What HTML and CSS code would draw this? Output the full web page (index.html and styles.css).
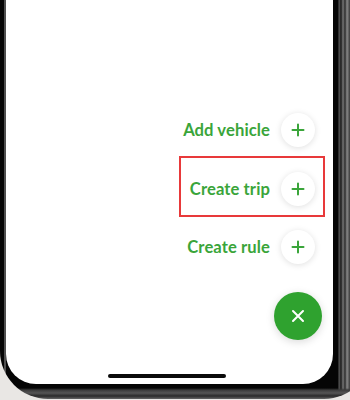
FILE: index.html
```html
<!DOCTYPE html>
<html>
<head>
<meta charset="utf-8">
<link rel="stylesheet" href="styles.css">
</head>
<body>
<div class="device">
  <div class="bezel">
    <div class="screen">
      <div class="menu">
        <div class="row">
          <span class="label">Add vehicle</span>
          <span class="circle"><svg width="14" height="14" viewBox="0 0 14 14"><path d="M7 1.5v11M1.5 7h11" stroke="#3aa53a" stroke-width="2" stroke-linecap="round"/></svg></span>
        </div>
        <div class="row highlight">
          <span class="label">Create trip</span>
          <span class="circle"><svg width="14" height="14" viewBox="0 0 14 14"><path d="M7 1.5v11M1.5 7h11" stroke="#3aa53a" stroke-width="2" stroke-linecap="round"/></svg></span>
        </div>
        <div class="row">
          <span class="label">Create rule</span>
          <span class="circle"><svg width="14" height="14" viewBox="0 0 14 14"><path d="M7 1.5v11M1.5 7h11" stroke="#3aa53a" stroke-width="2" stroke-linecap="round"/></svg></span>
        </div>
        <div class="fab"><svg width="14" height="14" viewBox="0 0 14 14"><path d="M2 2l10 10M12 2L2 12" stroke="#fff" stroke-width="2" stroke-linecap="round"/></svg></div>
      </div>
      <div class="home"></div>
    </div>
  </div>
</div>
</body>
</html>
```

FILE: styles.css
```css
html, body {
  margin: 0;
  padding: 0;
  background: #e9e7e4;
}
.device {
  width: 350px;
  height: 400px;
  overflow: hidden;
  background: #e9e7e4;
}
.bezel {
  width: 372px;
  height: 399px;
  box-sizing: border-box;
  padding: 0 39px 15px 6px;
  border-radius: 0 0 48px 48px;
  background:
    linear-gradient(to bottom, transparent 0, transparent 388px, #3a3a3a 390px, #555 393px, #2a2a2a 396px, #666 399px),
    linear-gradient(to right, #050505 0, #050505 4px, #9a9a9a 5px, #050505 6px, #050505 338px, #5a5a5a 339px, #1a1a1a 341px, #777 343px, #2c2c2c 345px, #8a8a8a 347px, #3a3a3a 350px, #555 372px);
}
.screen {
  width: 327px;
  height: 384px;
  background: #fff;
  border-radius: 0 0 30px 30px;
  display: flex;
  flex-direction: column;
  align-items: center;
  position: relative;
}
.menu {
  align-self: stretch;
  display: flex;
  flex-direction: column;
  align-items: flex-end;
  padding: 113px 11px 0 0;
}
.row {
  display: flex;
  align-items: center;
  gap: 11px;
  margin-right: 7px;
  margin-bottom: 24.5px;
  position: relative;
}
.label {
  font-family: Lato, "Noto Sans", sans-serif;
  font-weight: 700;
  font-size: 16.6px;
  color: #3aa53a;
  letter-spacing: 0.1px;
}
.circle {
  width: 34px;
  height: 34px;
  border-radius: 50%;
  background: #fff;
  box-shadow: 0 1px 6px rgba(0, 0, 0, 0.13);
  display: flex;
  align-items: center;
  justify-content: center;
}
.highlight::after {
  content: "";
  position: absolute;
  left: -11px;
  right: -10px;
  top: -16px;
  bottom: -11px;
  border: 2px solid #e8393a;
}
.fab {
  margin-top: 3px;
  width: 48px;
  height: 48px;
  border-radius: 50%;
  background: #2fa22f;
  box-shadow: 0 2px 8px rgba(0, 0, 0, 0.15);
  display: flex;
  align-items: center;
  justify-content: center;
}
.home {
  margin-top: auto;
  margin-bottom: 6px;
  width: 118px;
  height: 4px;
  border-radius: 2px;
  background: #0a0a0a;
  margin-left: -5px;
}
```
